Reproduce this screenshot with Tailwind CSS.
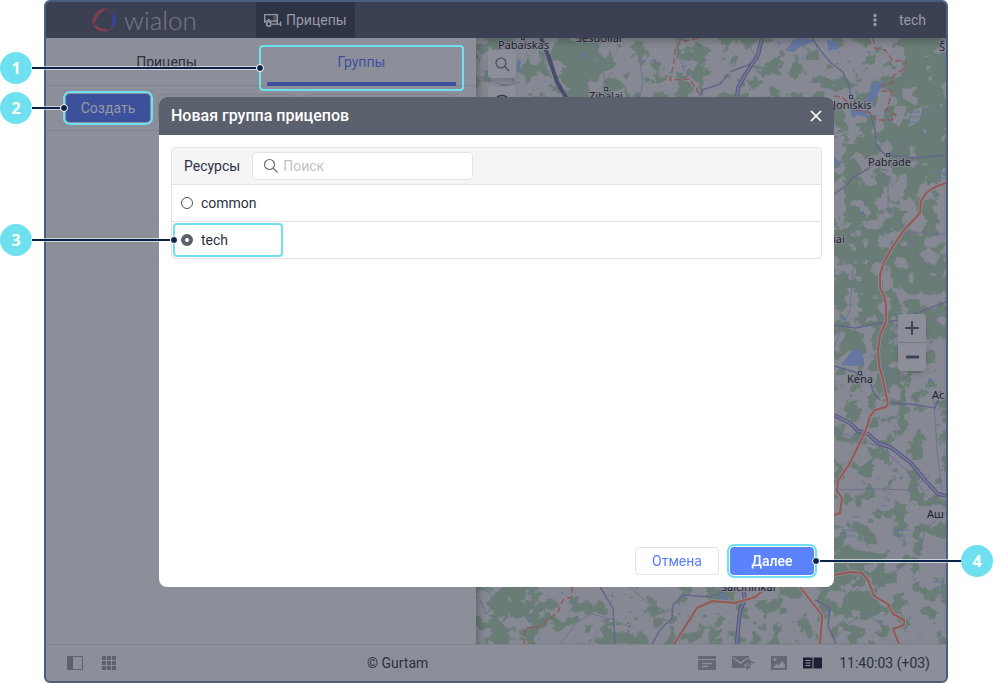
<!DOCTYPE html>
<html lang="ru">
<head>
    <meta charset="UTF-8">
    <meta name="viewport" content="width=device-width, initial-scale=1.0">
    <title>Новая группа прицепов</title>
    <script src="https://cdn.jsdelivr.net/npm/@tailwindcss/browser@4"></script>
</head>
<body class="relative min-h-screen overflow-hidden bg-white font-['Roboto',sans-serif] text-sm text-[#2a3142]">

    <!-- Application window -->
    <div class="ml-[44px] mr-[45px] h-screen flex flex-col border-2 border-[#4d5f80] rounded-md overflow-hidden bg-[#8c8f99]">

        <!-- Top bar -->
        <header class="h-9 shrink-0 flex items-center bg-[#3c4053] text-[#989ba5]">
            <div class="w-[210px] pl-[46px] flex items-center gap-2">
                <svg class="size-6 shrink-0" viewBox="0 0 24 24" fill="none" stroke-linecap="round">
                    <path d="M2 13.500C2.600 9 6 4 10.500 2.200" stroke="#7d4149" stroke-width="3.200"/>
                    <path d="M10.500 1C14.500 .6 17.500 1.800 19.500 4" stroke="#7d4149" stroke-width="1"/>
                    <path d="M21.600 8.500C22.600 12 22 15 20.800 17" stroke="#35439a" stroke-width="3.400"/>
                    <path d="M18 2.500C20.500 4 22 6 22.600 8.500" stroke="#35439a" stroke-width="1"/>
                    <path d="M3.500 18.500C6 21.200 9.500 22.200 13 22" stroke="#7d4149" stroke-width="3"/>
                    <path d="M.8 12C.4 15 1.400 17 3 18.500M13 23.200C16 23.300 18.500 22 20 19.500" stroke="#7d4149" stroke-width="1"/>
                </svg>
                <span class="font-['Lato',sans-serif] font-light text-[26px] leading-6 text-[#777b87]">wialon</span>
            </div>
            <a href="#" class="h-full px-2 flex items-center gap-1 bg-[#2e3345]">
                <svg class="w-[18px] h-4" viewBox="0 0 18 16" fill="none" stroke="#989ba5">
                    <path d="M.7 11V2.700H13.300V12.500" stroke-width="1.300"/>
                    <path d="M0 9.200H2.500L4.700 7.500L7 9.200H13.500" stroke-width="1.300"/>
                    <path d="M9 4L13 3V9H9.500Z" fill="#989ba5" fill-opacity=".35" stroke="none"/>
                    <circle cx="4.800" cy="12" r="2.200" stroke-width="1.500"/>
                    <path d="M8 12.200H16.600V9.500M16.600 12V14" stroke-width="1.300"/>
                </svg>
                <span>Прицепы</span>
            </a>
            <div class="ml-auto pr-5 flex items-center gap-5">
                <button aria-label="Меню">
                    <svg class="w-2 h-4" viewBox="0 0 8 16" fill="#989ba5">
                        <circle cx="4" cy="3.500" r="1.700"/><circle cx="4" cy="8" r="1.700"/><circle cx="4" cy="12.500" r="1.700"/>
                    </svg>
                </button>
                <a href="#">tech</a>
            </div>
        </header>

        <main class="flex-1 min-h-0 flex">
            <!-- Left panel -->
            <section class="w-[430px] shrink-0">
                <nav class="h-12 pl-[26px] pr-5 flex gap-1.5 border-b border-[#7f838e]">
                    <a href="#" class="flex-1 h-12 flex items-center justify-center">Прицепы</a>
                    <a href="#" class="relative flex-1 h-12 pt-1 flex items-center justify-center border-b-4 border-[#3c509c] text-[#3c509c]">
                        Группы
                        <span class="absolute -inset-x-2 top-[7px] -bottom-[9px] border-2 border-[#6ee0ef] rounded"></span>
                    </a>
                </nav>
                <div class="h-[45px] px-5 flex items-center gap-2 border-b border-[#7f838e]">
                    <button class="w-[84px] h-7 rounded bg-[#3c509c] text-[#969aa5] outline-2 outline-offset-1 outline-[#6ee0ef]">Создать</button>
                    <span class="w-[138px] h-7 border border-[#7f838e] rounded"></span>
                    <span class="flex-1 h-7 border border-[#7f838e] rounded"></span>
                </div>
            </section>

            <!-- Map -->
            <section class="relative flex-1 min-w-0 overflow-hidden bg-[#868993]">
                <svg class="block size-full" viewBox="476 38 470 606" preserveAspectRatio="xMinYMin slice">
                    <defs>
                        <filter id="forest" filterUnits="userSpaceOnUse" x="476" y="38" width="470" height="606" color-interpolation-filters="sRGB">
                            <feTurbulence type="fractalNoise" baseFrequency="0.065" numOctaves="5" seed="11"/>
                            <feColorMatrix values="0 0 0 0 0  0 0 0 0 0  0 0 0 0 0  1 0 0 0 0" result="noise"/>
                            <feGaussianBlur in="SourceAlpha" stdDeviation="6" result="density"/>
                            <feComposite in="noise" in2="density" operator="arithmetic" k2="1" k3="0.5"/>
                            <feColorMatrix values="0 0 0 0 0.412  0 0 0 0 0.486  0 0 0 0 0.463  0 0 0 18 -10.300"/>
                        </filter>
                        <filter id="ponds" filterUnits="userSpaceOnUse" x="476" y="38" width="470" height="606" color-interpolation-filters="sRGB">
                            <feTurbulence type="fractalNoise" baseFrequency="0.12" numOctaves="3" seed="4"/>
                            <feColorMatrix values="0 0 0 0 0.380  0 0 0 0 0.460  0 0 0 0 0.610  30 0 0 0 -23.500"/>
                        </filter>
                        <path id="highway" d="M762 38L758 55L745 75L738 88L737 97M834 415L850 423L858 431L868 434L878 443L890 447L910 462L925 480L938 494L946 496M743 587L745 600L740 610L738 630L737 644"/>
                        <path id="trunk" d="M946 183L935 187L926 193L921 201L920 213L904 230L893 246L884 262L880 275L880 288L884 296L886 305L886 322L880 335L878 350L879 365L883 380L886 395L888 403L886 407L875 410L870 416L866 430L850 463L838 481L837 491L842 498L840 513L834 515M834 575L850 572L862 573L868 580L874 596L888 604L893 614L904 620L904 625L893 629L899 644M674 644L697 608L712 601L735 603L755 597L764 590M800 587L822 615L822 620L820 644"/>
                    </defs>

                    <rect x="476" y="38" width="470" height="606" fill="#868993"/>
                    <g filter="url(#forest)">
                        <path d="M476 38H500L488 60H476Z" fill-opacity=".5"/>
                        <path d="M557 38H592L600 60L590 97H572L560 70Z" fill-opacity=".8"/>
                        <path d="M650 75L700 70V97H650Z" fill-opacity=".2"/>
                        <path d="M900 38H946V170H905L880 140L895 90Z" fill-opacity=".6"/>
                        <path d="M834 115L862 118L895 140L880 195H834Z" fill-opacity=".22"/>
                        <path d="M834 190L870 200L900 235L946 240V330L900 400H870L834 330Z" fill-opacity=".3"/>
                        <path d="M885 170H946V240H900Z" fill-opacity=".12"/>
                        <path d="M834 535H872L880 560L885 600L865 635H834Z" fill-opacity=".32"/>
                        <path d="M480 600L500 587H560L540 644H480Z" fill-opacity=".25"/>
                        <path d="M476 38H946V644H476Z" fill-opacity=".05"/>
                    </g>
                    <rect x="476" y="38" width="470" height="606" filter="url(#ponds)"/>

                    <!-- Clearings -->
                    <g fill="#868993">
                        <path d="M902 88L913 89L912 96L918 98L916 106L903 98Z"/>
                        <path d="M895 106L907 106L904 117L899 127L892 122Z"/>
                        <path d="M913 110L923 106L919 122L908 127Z"/>
                    </g>
                    <!-- Lakes -->
                    <g fill="#6577a0">
                        <path d="M786 51L793 40L803 38L815 41L800 47L793 52Z"/>
                        <path d="M827 40L838 42L839 49L828 51Z"/>
                        <path d="M867 99L872 84L882 80L881 88L876 97L868 105L862 106Z"/>
                        <path d="M850 108L864 110L870 118L858 115L852 118Z"/>
                        <path d="M841 365L851 352L859 347L864 358L864 365L853 366Z"/>
                        <path d="M518 58L521 62L519 73L516 71Z"/>
                        <path d="M580 54L585 52L586 57L581 57Z"/>
                        <path d="M722 593L729 600L726 602L719 598Z"/>
                        <path d="M834 155L841 165L839 168L834 162Z"/>
                    </g>
                    <!-- Marshes -->
                    <path d="M910 112H920M908 117H920M908 122H918M936 173H946M936 178H946M883 368H890M883 374H892M885 381H892M887 387H891M852 517H859M852 523H857M842 530H855M842 536H855M892 530H910M894 536H905M880 506H887M932 582H942M934 587H942" stroke="#6577a0" stroke-width="1"/>

                    <!-- Small roads -->
                    <g fill="none" stroke="#6f728c" stroke-width="1">
                        <path d="M597 38L598 52L604 75L606 88"/>
                        <path d="M676 38L680 55L684 70L700 84L701 92"/>
                        <path d="M476 76L490 80L505 86L520 82"/>
                        <path d="M640 62L643 82L640 97"/>
                        <path d="M888 175L888 212L902 225M882 171L892 186"/>
                        <path d="M834 348L840 332L850 310L853 270L870 245"/>
                        <path d="M903 225L912 245L930 268L946 282M888 225L900 232L946 234"/>
                        <path d="M834 490L880 489L908 490L930 476M934 400L937 450L942 490"/>
                        <path d="M875 592L885 578L910 562L922 545L925 530L946 512"/>
                        <path d="M834 430L880 447L910 473L930 500L946 506"/>
                        <path d="M560 644L577 622L592 614L615 620M630 587L655 610L665 615"/>
                        <path d="M834 640L850 622L868 614L882 626M480 600L487 614L500 596"/>
                        <path d="M750 38L751 50L759 60M941 110L920 135L905 150"/>
                        <path d="M903 128L900 150L887 156"/>
                    </g>
                    <!-- Secondary roads -->
                    <g fill="none" stroke="#64668a" stroke-width="1.500">
                        <path d="M812 38L820 50L830 62L843 72L850 90L851 97L870 113L875 130L876 145L885 155L917 158L946 155"/>
                        <path d="M730 72L748 65L755 60M700 96L702 90L720 84L728 74"/>
                        <path d="M834 194L847 185L852 178L866 170L882 158"/>
                        <path d="M834 325L855 328L870 325L898 320L930 308L946 302"/>
                        <path d="M834 366L855 372L870 380L873 392L880 400"/>
                        <path d="M887 403L910 404L935 408L938 400"/>
                        <path d="M600 587L613 608L615 644M652 644L660 630L672 618L673 605L683 595L710 597L728 590"/>
                        <path d="M815 600L830 608L828 626L836 644"/>
                    </g>
                    <!-- Highways -->
                    <g fill="none" stroke-linejoin="round">
                        <path d="M541 38L548 55L557 82L567 99" stroke="#4b4b70" stroke-width="4"/>
                        <use href="#highway" stroke="#55577c" stroke-width="4"/>
                        <use href="#highway" stroke="#74769a" stroke-width="2"/>
                        <use href="#trunk" stroke="#8b8a92" stroke-width="4"/>
                        <use href="#trunk" stroke="#965854" stroke-width="2"/>
                    </g>
                    <!-- District borders -->
                    <g fill="none" stroke="#905b58" stroke-width="1.500" stroke-dasharray="6 3">
                        <path d="M698 38L680 42L675 50L674 62L670 80L690 79L700 95"/>
                        <path d="M873 38L875 48L885 50L892 60L906 62L905 68L893 76L892 83L882 85L882 91L892 91L887 110L896 115L892 120L876 120L871 113L856 110L842 97L834 96"/>
                        <path d="M572 587L572 597L563 600L558 612L545 622L538 627L525 628L524 644"/>
                    </g>

                    <!-- Places -->
                    <g fill="#868993" stroke="#3a3c50" stroke-width="1">
                        <rect x="604.500" y="87.500" width="3" height="3"/>
                        <rect x="849.500" y="95.500" width="3" height="3"/>
                        <rect x="886.500" y="153.500" width="3" height="3"/>
                        <rect x="858.500" y="371.500" width="3" height="3"/>
                        <rect x="521.500" y="36.500" width="3" height="3"/>
                    </g>
                    <g class="font-['Noto_Sans',sans-serif] text-[11px]" fill="#1f2230" stroke="#868993" stroke-width="2" paint-order="stroke">
                        <text x="498" y="49">Pabaiskas</text>
                        <text x="576" y="42">Šešuoliai</text>
                        <text x="589" y="100">Zibalai</text>
                        <text x="833" y="109">Joniškis</text>
                        <text x="939" y="51">Š</text>
                        <text x="868" y="166">Pabradė</text>
                        <text x="833" y="243">iai</text>
                        <text x="847" y="383">Kena</text>
                        <text x="932" y="399">Ас</text>
                        <text x="927" y="518">Аш</text>
                        <text x="721" y="591">Šalčininkai</text>
                    </g>
                </svg>
                <div class="absolute inset-0 pointer-events-none shadow-[inset_4px_4px_6px_#00000033]"></div>

                <button aria-label="Найти на карте" class="absolute left-3 top-3 size-7 flex items-center justify-center rounded-sm bg-[#8c8f99] shadow-md">
                    <svg class="size-4" viewBox="0 0 16 16" fill="none" stroke="#484c5b" stroke-width="1.200"><circle cx="7" cy="7" r="5"/><path d="M10.500 10.500L15 15"/></svg>
                </button>
                <button aria-label="Видимость слоёв" class="absolute left-3 top-12 size-7 flex items-center justify-center rounded-sm bg-[#8c8f99] shadow-md">
                    <svg class="size-4" viewBox="0 0 16 16" fill="none" stroke="#33384a" stroke-width="1.500"><path d="M1 8C4 2 12 2 15 8C12 14 4 14 1 8Z"/><circle cx="8" cy="8" r="2.500"/></svg>
                </button>
                <div class="absolute right-5 top-[276px] w-7 flex flex-col rounded-sm bg-[#8c8f99] shadow-md">
                    <button aria-label="Приблизить" class="h-[29px] flex items-center justify-center border-b border-[#747884]">
                        <svg class="size-4" viewBox="0 0 16 16" stroke="#3f4454" stroke-width="2"><path d="M8 1V15M1 8H15"/></svg>
                    </button>
                    <button aria-label="Отдалить" class="h-7 flex items-center justify-center">
                        <svg class="size-4" viewBox="0 0 16 16" stroke="#3f4454" stroke-width="3"><path d="M2 8H15"/></svg>
                    </button>
                </div>
            </section>
        </main>

        <!-- Bottom bar -->
        <footer class="h-[37px] shrink-0 pl-[21px] pr-4 flex items-center justify-between border-t border-[#7f838e]">
            <div class="flex items-center">
                <div class="w-[300px] flex items-center gap-[18px]">
                    <button aria-label="Левая панель">
                        <svg class="size-4" viewBox="0 0 16 16"><path d="M.5 1.500h15v13H.5z" fill="none" stroke="#5d616d"/><path d="M0 1h6v14H0z" fill="#5d616d"/></svg>
                    </button>
                    <button aria-label="Приложения">
                        <svg class="size-4" viewBox="0 0 16 16" fill="#5d616d"><path d="M1 1h4v4H1zM6 1h4v4H6zM11 1h4v4h-4zM1 6h4v4H1zM6 6h4v4H6zM11 6h4v4h-4zM1 11h4v4H1zM6 11h4v4H6zM11 11h4v4h-4z"/></svg>
                    </button>
                </div>
                <a href="#">© Gurtam</a>
            </div>
            <div class="flex items-center gap-4">
                <button aria-label="Уведомления">
                    <svg class="w-[18px] h-4" viewBox="0 0 18 16"><path d="M0 1h18v3H0zM0 5h18v10H0z" fill="#646874"/><path d="M4 8.500h10M4 11.500h6" stroke="#8c8f99" stroke-width="1.300"/></svg>
                </button>
                <button aria-label="Сообщения">
                    <svg class="w-[23px] h-4" viewBox="0 0 23 16"><path d="M0 1h17v6l-5 3v3H0z" fill="#646874"/><path d="M1 2.500L8.500 8L16 2.500" fill="none" stroke="#8c8f99" stroke-width="1.500"/><path d="M22 7.500h-5M19 5l-3 2.500L19 10M11 12h5M14.500 9.500L17.500 12L14.500 14.500" fill="none" stroke="#646874" stroke-width="1.600"/></svg>
                </button>
                <button aria-label="Изображения">
                    <svg class="size-4" viewBox="0 0 16 16"><path d="M0 1h16v14H0z" fill="#646874"/><circle cx="4" cy="4.500" r="1.500" fill="#8c8f99"/><path d="M2 13L5.500 8.500L7.500 10.500L11 6L14 10V13Z" fill="#8c8f99"/></svg>
                </button>
                <button aria-label="Журнал">
                    <svg class="w-5 h-4" viewBox="0 0 20 16"><path d="M0 2.500h9.500v11H0zM10.500 2.500H19v11h-8.500z" fill="#1c2234"/><path d="M2.500 5.500h5M2.500 8h5M2.500 10.500h5" stroke="#8c8f99"/></svg>
                </button>
                <time>11:40:03 (+03)</time>
            </div>
        </footer>
    </div>

    <!-- Dialog -->
    <div class="fixed inset-0 flex items-center justify-center">
        <form role="dialog" aria-labelledby="dialog-title" class="w-[675px] h-[490px] flex flex-col rounded-lg overflow-hidden bg-white">
            <div class="h-[38px] shrink-0 px-3 flex items-center justify-between bg-[#5b606d] text-white">
                <h2 id="dialog-title" class="text-base font-medium">Новая группа прицепов</h2>
                <button type="button" aria-label="Закрыть">
                    <svg class="size-3" viewBox="0 0 12 12" stroke="#fff" stroke-width="1.700"><path d="M1 1L11 11M11 1L1 11"/></svg>
                </button>
            </div>
            <div class="flex-1 p-3">
                <div class="border border-[#e2e3e5] rounded overflow-hidden">
                    <div class="h-[37px] pl-3 flex items-center gap-3 border-b border-[#e2e3e5] bg-[#f5f5f5]">
                        <label for="search">Ресурсы</label>
                        <div class="w-[221px] h-7 pl-2.5 flex items-center gap-1 border border-[#e2e3e5] rounded bg-white">
                            <svg class="size-4 shrink-0" viewBox="0 0 16 16" fill="none" stroke="#6b707c" stroke-width="1.200"><circle cx="6.500" cy="6.500" r="5"/><path d="M10 10L14.500 14.500"/></svg>
                            <input id="search" type="search" placeholder="Поиск" class="w-full min-w-0 outline-none placeholder:text-[#c0c2c7]">
                        </div>
                    </div>
                    <div class="h-[37px] pl-[9px] flex items-center border-b border-[#e2e3e5]">
                        <label class="flex items-center gap-2">
                            <input type="radio" name="resource" class="appearance-none size-3 rounded-full border border-[#4b505f] bg-white checked:border-4">
                            common
                        </label>
                    </div>
                    <div class="h-9 pl-px flex items-center">
                        <label class="w-[110px] h-[34px] pl-1.5 flex items-center gap-2 border-2 border-[#6ee0ef] rounded">
                            <input type="radio" name="resource" checked class="appearance-none size-3 rounded-full border border-[#5b606d] bg-white checked:border-4">
                            tech
                        </label>
                    </div>
                </div>
            </div>
            <div class="shrink-0 pr-5 pb-3 flex justify-end gap-[11px]">
                <button type="button" class="w-[84px] h-7 border border-[#e2e3e5] rounded text-[#587dfb]">Отмена</button>
                <button type="submit" class="w-[84px] h-7 rounded bg-[#5a83fc] font-medium text-white outline-2 outline-offset-1 outline-[#6ee0ef]">Далее</button>
            </div>
        </form>
    </div>

    <!-- Step callouts -->
    <div class="absolute left-0 top-[52px] w-[264px] flex items-center font-['Open_Sans',sans-serif] text-base font-bold text-white">
        <span class="size-8 shrink-0 flex items-center justify-center rounded-full bg-[#6ee0ef]">1</span>
        <span class="flex-1 h-0.5 bg-[#0a2449] ring-1 ring-white/60"></span>
        <span class="size-2 rounded-full border border-white bg-[#0a2449]"></span>
    </div>
    <div class="absolute left-0 top-[92px] w-[68px] flex items-center font-['Open_Sans',sans-serif] text-base font-bold text-white">
        <span class="size-8 shrink-0 flex items-center justify-center rounded-full bg-[#6ee0ef]">2</span>
        <span class="flex-1 h-0.5 bg-[#0a2449] ring-1 ring-white/60"></span>
        <span class="size-2 rounded-full border border-white bg-[#0a2449]"></span>
    </div>
    <div class="absolute left-0 top-[224px] w-[178px] flex items-center font-['Open_Sans',sans-serif] text-base font-bold text-white">
        <span class="size-8 shrink-0 flex items-center justify-center rounded-full bg-[#6ee0ef]">3</span>
        <span class="flex-1 h-0.5 bg-[#0a2449] ring-1 ring-white/60"></span>
        <span class="size-2 rounded-full border border-white bg-[#0a2449]"></span>
    </div>
    <div class="absolute right-0 top-[545px] w-[181px] flex items-center font-['Open_Sans',sans-serif] text-base font-bold text-white">
        <span class="size-2 rounded-full border border-white bg-[#0a2449]"></span>
        <span class="flex-1 h-0.5 bg-[#0a2449] ring-1 ring-white/60"></span>
        <span class="size-8 shrink-0 flex items-center justify-center rounded-full bg-[#6ee0ef]">4</span>
    </div>

</body>
</html>
